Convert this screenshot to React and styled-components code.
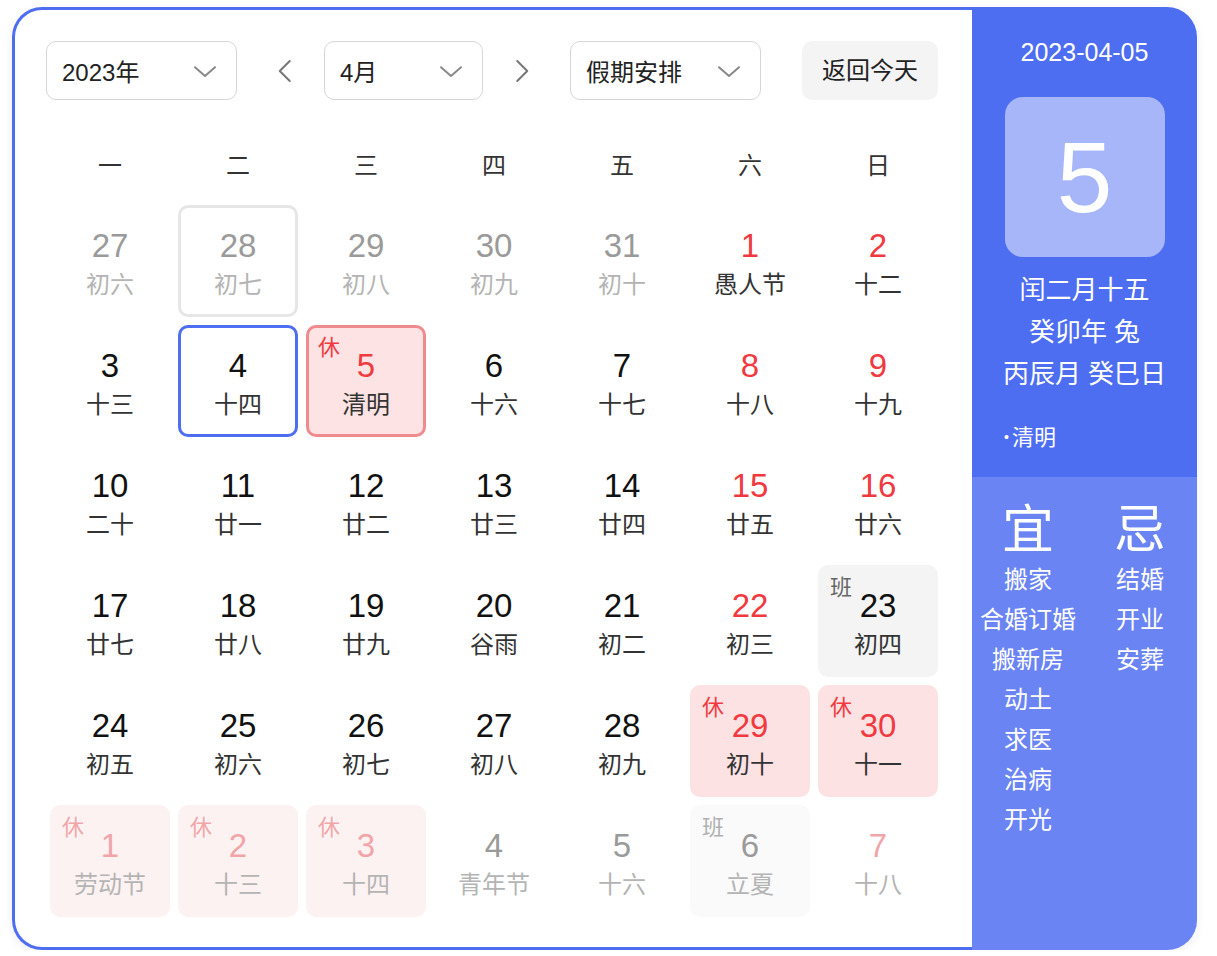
import React from "react";
import styled, { createGlobalStyle, css } from "styled-components";

const GlobalStyle = createGlobalStyle`
  body {
    margin: 0;
    background: #ffffff;
    font-family: "Liberation Sans", "Noto Sans CJK SC", sans-serif;
  }
`;

const BLUE = "#4e6ef2";
const RED = "#f03a3f";

const Page = styled.div`
  padding: 7px 0 0 12px;
`;

const Card = styled.div`
  display: flex;
  width: 1185px;
  height: 943px;
  border-radius: 30px;
  box-shadow: 0 3px 10px rgba(0, 0, 0, 0.07);
`;

const Main = styled.div`
  box-sizing: border-box;
  width: 960px;
  height: 100%;
  border: 3px solid ${BLUE};
  border-right: none;
  border-radius: 30px 0 0 30px;
  padding: 31px 34px 0 31px;
  background: #fff;
`;

const Toolbar = styled.div`
  display: flex;
  align-items: center;
  height: 59px;
`;

const Select = styled.div`
  box-sizing: border-box;
  display: flex;
  align-items: center;
  justify-content: space-between;
  width: ${(p) => p.$w}px;
  height: 59px;
  padding: 0 16px 0 15px;
  border: 1.5px solid #d6d6d6;
  border-radius: 10px;
  font-size: 24px;
  color: #222;
`;

const ArrowBtn = styled.div`
  display: flex;
  align-items: center;
  justify-content: center;
  width: 40px;
  height: 59px;
  margin: ${(p) => p.$m};
`;

const TodayBtn = styled.div`
  margin-left: auto;
  width: 136px;
  height: 59px;
  line-height: 59px;
  text-align: center;
  border-radius: 10px;
  background: #f4f4f5;
  font-size: 24px;
  color: #222;
`;

const WeekHead = styled.div`
  display: grid;
  grid-template-columns: repeat(7, 120px);
  column-gap: 8px;
  margin: 30px 0 0 4px;
  height: 70px;
  line-height: 72px;
  text-align: center;
  font-size: 24px;
  color: #333;
`;

const Grid = styled.div`
  display: grid;
  grid-template-columns: repeat(7, 120px);
  grid-auto-rows: 112px;
  gap: 8px;
  margin: 5px 0 0 4px;
`;

const cellVariants = {
  plain: css``,
  hover: css`
    border-color: #e6e6e6;
  `,
  today: css`
    border-color: ${BLUE};
  `,
  picked: css`
    border-color: #ef8a8e;
    background: #fde3e4;
  `,
  rest: css`
    background: #fde2e3;
  `,
  work: css`
    background: #f4f4f5;
  `,
  restFaded: css`
    background: #fdf2f2;
  `,
  workFaded: css`
    background: #fafafa;
  `,
};

const Cell = styled.div`
  position: relative;
  box-sizing: border-box;
  display: flex;
  flex-direction: column;
  align-items: center;
  padding-top: 18px;
  border: 3px solid transparent;
  border-radius: 10px;
  ${(p) => cellVariants[p.$variant || "plain"]}
`;

const Num = styled.div`
  font-size: 33px;
  line-height: 40px;
  color: ${(p) =>
    p.$red ? (p.$faded ? "#f2a5a8" : RED) : p.$faded ? "#9a9a9a" : "#111"};
`;

const Lunar = styled.div`
  font-size: 24px;
  line-height: 38px;
  color: ${(p) => (p.$faded ? "#b4b4b4" : "#333")};
`;

const Tag = styled.span`
  position: absolute;
  top: 7px;
  left: 9px;
  font-size: 22px;
  line-height: 26px;
  color: ${(p) =>
    p.$kind === "休"
      ? p.$faded
        ? "#f2a5a8"
        : RED
      : p.$faded
      ? "#b0b0b0"
      : "#666"};
`;

const Side = styled.div`
  display: flex;
  flex-direction: column;
  width: 225px;
  height: 100%;
  border-radius: 0 30px 30px 0;
  overflow: hidden;
  color: #fff;
`;

const SideTop = styled.div`
  box-sizing: border-box;
  display: flex;
  flex-direction: column;
  align-items: center;
  height: 470px;
  padding-top: 30px;
  background: ${BLUE};
`;

const DateLine = styled.div`
  font-size: 25px;
  line-height: 30px;
`;

const DayBox = styled.div`
  width: 160px;
  height: 160px;
  margin-top: 30px;
  border-radius: 18px;
  background: #a7b6f9;
  font-size: 100px;
  line-height: 160px;
  text-align: center;
`;

const LunarInfo = styled.div`
  margin-top: 12px;
  font-size: 26px;
  line-height: 42px;
  text-align: center;
`;

const Term = styled.div`
  align-self: flex-start;
  margin: 21px 0 0 32px;
  font-size: 22px;
  line-height: 42px;
`;

const Dot = styled.span`
  font-size: 14px;
  margin-right: 3px;
  vertical-align: 3px;
`;

const SideBottom = styled.div`
  flex: 1;
  display: grid;
  grid-template-columns: 112px 112px;
  align-items: start;
  padding-top: 23px;
  background: #6a84f3;
`;

const YiJi = styled.div`
  display: flex;
  flex-direction: column;
  align-items: center;
`;

const YiJiHead = styled.div`
  font-size: 52px;
  line-height: 60px;
`;

const YiJiItem = styled.div`
  font-size: 24px;
  line-height: 40px;
  white-space: nowrap;
`;

const Chevron = ({ dir, size = 24, color = "#777" }) => {
  const d = {
    down: "M4 9l8 7 8-7",
    left: "M15 4l-8 8 8 8",
    right: "M9 4l8 8-8 8",
  }[dir];
  return (
    <svg width={size} height={size} viewBox="0 0 24 24" fill="none">
      <path d={d} stroke={color} strokeWidth="1.6" strokeLinecap="round" strokeLinejoin="round" />
    </svg>
  );
};

const weeks = [
  [
    { d: 27, l: "初六", o: 1 },
    { d: 28, l: "初七", o: 1, v: "hover" },
    { d: 29, l: "初八", o: 1 },
    { d: 30, l: "初九", o: 1 },
    { d: 31, l: "初十", o: 1 },
    { d: 1, l: "愚人节", r: 1 },
    { d: 2, l: "十二", r: 1 },
  ],
  [
    { d: 3, l: "十三" },
    { d: 4, l: "十四", v: "today" },
    { d: 5, l: "清明", r: 1, v: "picked", t: "休" },
    { d: 6, l: "十六" },
    { d: 7, l: "十七" },
    { d: 8, l: "十八", r: 1 },
    { d: 9, l: "十九", r: 1 },
  ],
  [
    { d: 10, l: "二十" },
    { d: 11, l: "廿一" },
    { d: 12, l: "廿二" },
    { d: 13, l: "廿三" },
    { d: 14, l: "廿四" },
    { d: 15, l: "廿五", r: 1 },
    { d: 16, l: "廿六", r: 1 },
  ],
  [
    { d: 17, l: "廿七" },
    { d: 18, l: "廿八" },
    { d: 19, l: "廿九" },
    { d: 20, l: "谷雨" },
    { d: 21, l: "初二" },
    { d: 22, l: "初三", r: 1 },
    { d: 23, l: "初四", v: "work", t: "班" },
  ],
  [
    { d: 24, l: "初五" },
    { d: 25, l: "初六" },
    { d: 26, l: "初七" },
    { d: 27, l: "初八" },
    { d: 28, l: "初九" },
    { d: 29, l: "初十", r: 1, v: "rest", t: "休" },
    { d: 30, l: "十一", r: 1, v: "rest", t: "休" },
  ],
  [
    { d: 1, l: "劳动节", o: 1, r: 1, v: "restFaded", t: "休" },
    { d: 2, l: "十三", o: 1, r: 1, v: "restFaded", t: "休" },
    { d: 3, l: "十四", o: 1, r: 1, v: "restFaded", t: "休" },
    { d: 4, l: "青年节", o: 1 },
    { d: 5, l: "十六", o: 1 },
    { d: 6, l: "立夏", o: 1, v: "workFaded", t: "班" },
    { d: 7, l: "十八", o: 1, r: 1 },
  ],
];

const yi = ["搬家", "合婚订婚", "搬新房", "动土", "求医", "治病", "开光"];
const ji = ["结婚", "开业", "安葬"];

export default function App() {
  return (
    <Page>
      <GlobalStyle />
      <Card>
        <Main>
          <Toolbar>
            <Select $w={191}>
              <span>2023年</span>
              <Chevron dir="down" size={30} color="#888" />
            </Select>
            <ArrowBtn $m="0 18px 0 29px">
              <Chevron dir="left" size={30} color="#777" />
            </ArrowBtn>
            <Select $w={159}>
              <span>4月</span>
              <Chevron dir="down" size={30} color="#888" />
            </Select>
            <ArrowBtn $m="0 29px 0 18px">
              <Chevron dir="right" size={30} color="#777" />
            </ArrowBtn>
            <Select $w={191}>
              <span>假期安排</span>
              <Chevron dir="down" size={30} color="#888" />
            </Select>
            <TodayBtn>返回今天</TodayBtn>
          </Toolbar>
          <WeekHead>
            {["一", "二", "三", "四", "五", "六", "日"].map((w) => (
              <div key={w}>{w}</div>
            ))}
          </WeekHead>
          <Grid>
            {weeks.flat().map((c, i) => (
              <Cell key={i} $variant={c.v}>
                {c.t && (
                  <Tag $kind={c.t} $faded={!!c.o}>
                    {c.t}
                  </Tag>
                )}
                <Num $red={!!c.r} $faded={!!c.o}>
                  {c.d}
                </Num>
                <Lunar $faded={!!c.o}>{c.l}</Lunar>
              </Cell>
            ))}
          </Grid>
        </Main>
        <Side>
          <SideTop>
            <DateLine>2023-04-05</DateLine>
            <DayBox>5</DayBox>
            <LunarInfo>
              <div>闰二月十五</div>
              <div>癸卯年 兔</div>
              <div>丙辰月 癸巳日</div>
            </LunarInfo>
            <Term>
              <Dot>•</Dot>清明
            </Term>
          </SideTop>
          <SideBottom>
            <YiJi>
              <YiJiHead>宜</YiJiHead>
              {yi.map((s) => (
                <YiJiItem key={s}>{s}</YiJiItem>
              ))}
            </YiJi>
            <YiJi>
              <YiJiHead>忌</YiJiHead>
              {ji.map((s) => (
                <YiJiItem key={s}>{s}</YiJiItem>
              ))}
            </YiJi>
          </SideBottom>
        </Side>
      </Card>
    </Page>
  );
}
